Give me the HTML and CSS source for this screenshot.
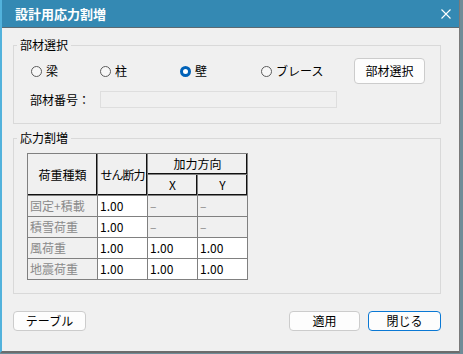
FILE: index.html
```html
<!DOCTYPE html>
<html lang="ja">
<head>
    <meta charset="UTF-8">
    <title>設計用応力割増</title>
    <link rel="stylesheet" href="styles.css">
</head>
<body>
<div class="window">
    <div class="titlebar">
        <span class="title">設計用応力割増</span>
        <svg class="close" width="10" height="10" viewBox="0 0 10 10">
            <path d="M0.5 0.5 L9.5 9.5 M9.5 0.5 L0.5 9.5" stroke="#fff" stroke-width="1.1" fill="none"/>
        </svg>
    </div>
    <div class="content">
        <fieldset class="group group-member">
            <legend>部材選択</legend>
            <div class="radio-row">
                <label class="radio radio-beam"><span class="dot"></span>梁</label>
                <label class="radio radio-column"><span class="dot"></span>柱</label>
                <label class="radio radio-wall"><span class="dot checked"></span>壁</label>
                <label class="radio"><span class="dot"></span>ブレース</label>
                <button class="btn btn-select">部材選択</button>
            </div>
            <div class="number-row">
                <span class="field-label">部材番号：</span>
                <span class="field-input"></span>
            </div>
        </fieldset>

        <fieldset class="group group-stress">
            <legend>応力割増</legend>
            <table class="grid">
                <colgroup>
                    <col class="c-kind">
                    <col class="c-val">
                    <col class="c-val">
                    <col class="c-val">
                </colgroup>
                <tr>
                    <th rowspan="2">荷重種類</th>
                    <th rowspan="2" class="tight">せん断力</th>
                    <th colspan="2">加力方向</th>
                </tr>
                <tr>
                    <th>X</th>
                    <th>Y</th>
                </tr>
                <tr>
                    <td class="ro">固定+積載</td>
                    <td>1.00</td>
                    <td class="ro">–</td>
                    <td class="ro">–</td>
                </tr>
                <tr>
                    <td class="ro">積雪荷重</td>
                    <td>1.00</td>
                    <td class="ro">–</td>
                    <td class="ro">–</td>
                </tr>
                <tr>
                    <td class="ro">風荷重</td>
                    <td>1.00</td>
                    <td>1.00</td>
                    <td>1.00</td>
                </tr>
                <tr>
                    <td class="ro">地震荷重</td>
                    <td>1.00</td>
                    <td>1.00</td>
                    <td>1.00</td>
                </tr>
            </table>
        </fieldset>

        <div class="footer">
            <button class="btn btn-table">テーブル</button>
            <button class="btn btn-apply">適用</button>
            <button class="btn btn-close btn-default">閉じる</button>
        </div>
    </div>
</div>
</body>
</html>
```

FILE: styles.css
```css
*{
    margin: 0;
    padding: 0;
    box-sizing: border-box;
}
body{
    background-color: #6f8c98;
    font-family: "Noto Sans CJK JP", "Noto Sans", sans-serif;
    font-size: 12px;
    color: #000;
}
.window{
    width: 460px;
    height: 353px;
    background-color: #f0f0f0;
    border-left: 2px solid #52b2dc;
    border-right: 1px solid #7a7a7a;
    border-bottom: 2px solid #6c6c6c;
}
.titlebar{
    height: 28px;
    background-color: #3489b3;
    border-bottom: 1px solid #5b6a73;
    display: flex;
    align-items: center;
    padding: 0 8px 0 13px;
}
.title{
    color: #fff;
    font-weight: bold;
    font-size: 13px;
    line-height: 16px;
    flex: 1;
}
.close{
    display: block;
    margin-top: 1px;
}
.content{
    padding: 10px 18px 0 11px;
}
.group{
    border: 1px solid #d9d9d9;
    padding: 0;
}
.group legend{
    font-size: 12px;
    line-height: 14px;
    margin-left: 3px;
    padding: 0 3px;
}
.group-member{
    padding-bottom: 15px;
}
.group-stress{
    margin-top: 7px;
    padding-bottom: 13px;
}
.radio-row{
    display: flex;
    align-items: center;
    height: 26px;
    margin-top: 6px;
    padding-left: 17px;
    padding-right: 15px;
}
.radio{
    display: flex;
    align-items: center;
    line-height: 14px;
}
.radio-beam{
    width: 69px;
}
.radio-column{
    width: 80px;
}
.radio-wall{
    width: 81px;
}
.dot{
    width: 11px;
    height: 11px;
    border: 1px solid #5c5c5c;
    border-radius: 50%;
    margin-right: 4px;
    background-color: #f7f7f7;
}
.dot.checked{
    border: 3.5px solid #0062b8;
    background-color: #fff;
}
.btn{
    font-family: inherit;
    font-size: 12px;
    line-height: 14px;
    background-color: #fdfdfd;
    border: 1px solid #cccccc;
    border-radius: 4px;
    height: 20px;
    color: #000;
}
.btn-select{
    margin-left: auto;
    width: 71px;
    height: 26px;
}
.number-row{
    display: flex;
    align-items: center;
    height: 17px;
    margin-top: 7px;
    padding-left: 16px;
}
.field-label{
    width: 70px;
    line-height: 14px;
}
.field-input{
    width: 237px;
    height: 17px;
    border: 1px solid #dedede;
    background-color: #f0f0f0;
}
.grid{
    margin: 8px 0 0 13px;
    border-collapse: collapse;
    table-layout: fixed;
    width: 221px;
    font-size: 12px;
}
.c-kind{
    width: 70px;
}
.c-val{
    width: 50px;
}
.grid tr{
    height: 21px;
}
.grid th{
    font-weight: normal;
    background-color: #f0f0f0;
    border: 1px solid #808080;
    box-shadow: inset -1px -1px 0 #111;
    line-height: 14px;
    padding: 0;
}
.grid th.tight{
    letter-spacing: -1px;
}
.grid td{
    border: 1px solid #808080;
    background-color: #fff;
    padding: 0 2px;
    line-height: 14px;
    white-space: nowrap;
    overflow: hidden;
}
.grid td.ro{
    background-color: #f0f0f0;
    color: #8a8a8a;
}
.footer{
    display: flex;
    margin-top: 17px;
}
.btn-table{
    width: 73px;
}
.btn-apply{
    width: 71px;
    margin-left: auto;
}
.btn-close{
    width: 73px;
    margin-left: 8px;
}
.btn-default{
    border-color: #0a78d4;
}
```
